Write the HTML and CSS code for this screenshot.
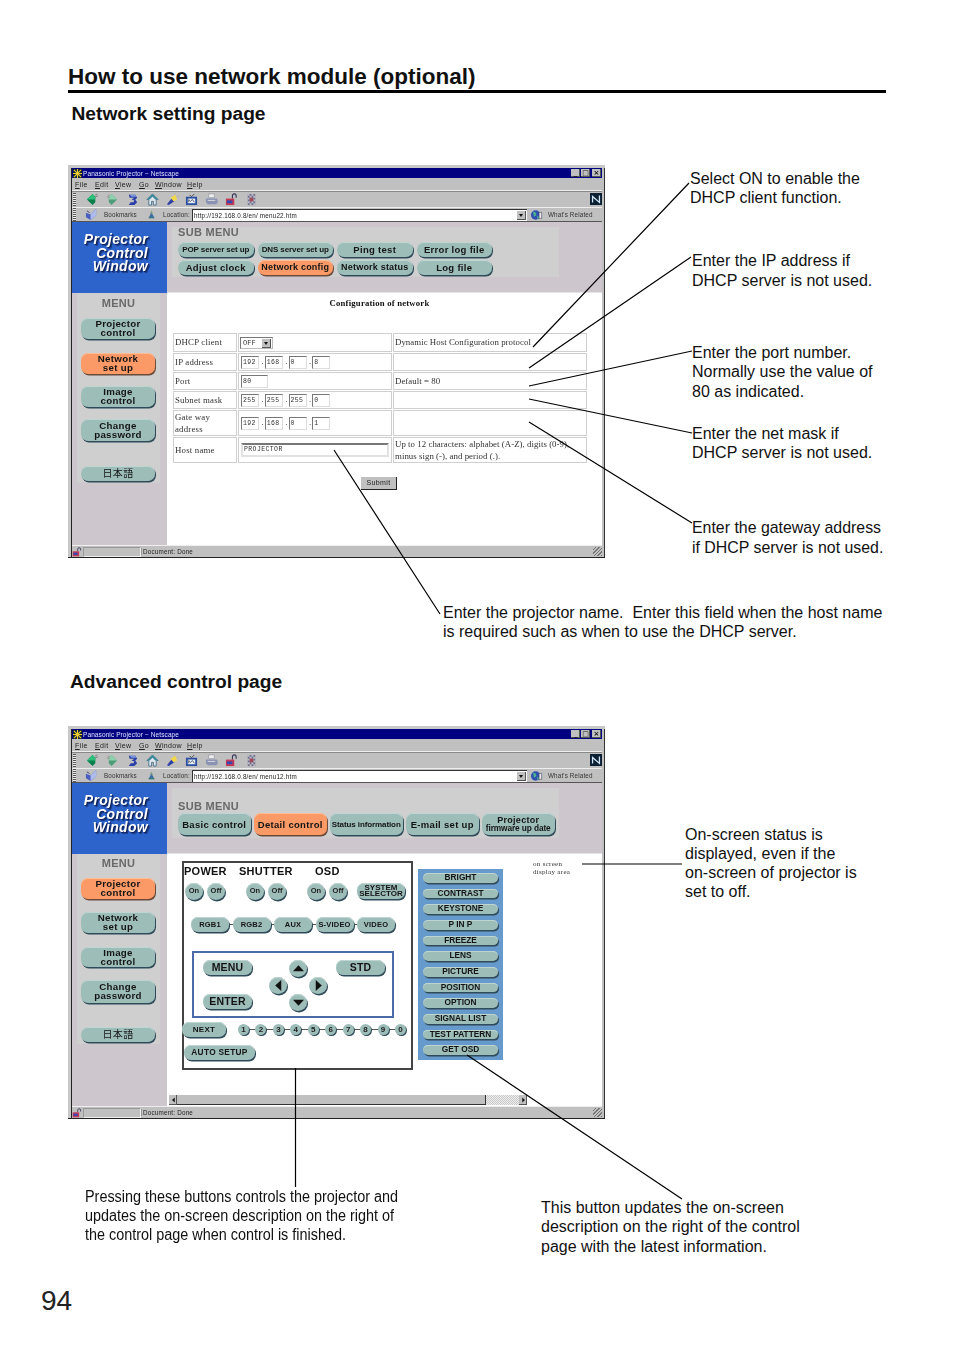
FILE: index.html
```html
<!DOCTYPE html>
<html lang="en">
<head>
<meta charset="utf-8">
<title>How to use network module (optional)</title>
<link rel="stylesheet" href="styles.css">
</head>
<body>
<svg class="defs" width="0" height="0" aria-hidden="true">
  <symbol id="i-back" viewBox="0 0 14 14"><path d="M7 1 1 7l6 6 3-3V4z" fill="#07804a"/><path d="M7 1 1 7h9V4z" fill="#2cc07c"/><path d="M10 2l2-1M10 4l3-1" stroke="#555" stroke-width=".7"/></symbol>
  <symbol id="i-fwd" viewBox="0 0 14 14"><path d="M6 1l6 6-6 6-3-3V4z" fill="#4f9c7a"/><path d="M6 1l6 6H3V4z" fill="#8fd0ae"/><path d="M4 3 2 2M4 5 1 4" stroke="#777" stroke-width=".7"/></symbol>
  <symbol id="i-reload" viewBox="0 0 14 14"><path d="M3 2h7l2 3-2 2 2 3-3 3H3l2-3h3l1-2-3-1 3-2H4z" fill="#2a3fa8"/><path d="M4 2h6l1 2H6z" fill="#7f9ae0"/></symbol>
  <symbol id="i-home" viewBox="0 0 14 14"><path d="M7 1 1 7h2v6h3V9h2v4h3V7h2z" fill="#dfe6ee" stroke="#2f5f7a" stroke-width=".8"/><path d="M7 1 1 7h3l3-3 3 3h3z" fill="#3a8a9c"/></symbol>
  <symbol id="i-search" viewBox="0 0 14 14"><path d="M1 12 6 6l3 3-6 4z" fill="#2d40a8"/><path d="M5 5l5-3 2 5-4 2z" fill="#f3d74a"/><path d="M9 1l2-1M12 4l2-1" stroke="#aa8" stroke-width=".7"/></symbol>
  <symbol id="i-guide" viewBox="0 0 14 14"><path d="M5 2 7 4l3-3" fill="none" stroke="#333" stroke-width=".8"/><rect x="1" y="4" width="12" height="9" fill="#2d4fa0"/><rect x="3" y="6" width="8" height="5" fill="#e6eef6"/><path d="M4 10V7l2 2 2-2 2 3" fill="none" stroke="#223" stroke-width=".7"/></symbol>
  <symbol id="i-print" viewBox="0 0 14 14"><path d="M4 1h6v4H4z" fill="#eee" stroke="#889" stroke-width=".6"/><path d="M1 6h12l1 4-2 2H3L1 10z" fill="#8a93b4"/><path d="M3 8h8" stroke="#ddd"/></symbol>
  <symbol id="i-lock" viewBox="0 0 14 14"><path d="M8 6V3a2 2 0 0 1 4 0v2" fill="none" stroke="#335" stroke-width="1.2"/><rect x="1" y="6" width="9" height="7" fill="#c43a55"/><rect x="2" y="8" width="6" height="3" fill="#3647b4"/></symbol>
  <symbol id="i-stop" viewBox="0 0 14 14"><path d="M3 1h8v12H3z" fill="#6f6f96"/><path d="M3 1h2v2H3zm4 0h2v2H7zM5 3h2v2H5zm4 0h2v2H9zM3 5h2v2H3zm4 0h2v2H7zM5 7h2v2H5zm4 0h2v2H9zM3 9h2v2H3zm4 0h2v2H7zM5 11h2v2H5zm4 0h2v2H9z" fill="#c0c0c0"/><rect x="5" y="5" width="4" height="4" fill="#a54a5c"/></symbol>
  <symbol id="i-book" viewBox="0 0 14 14"><path d="M1 5l5 2 6-6v7l-6 5-5-3z" fill="#4a5ec0"/><path d="M6 7l6-6v7l-6 5z" fill="#aebcec"/><path d="M2 3l3 2" stroke="#226" stroke-width=".8"/></symbol>
  <symbol id="i-loc" viewBox="0 0 14 14"><path d="M7 1l2 5h-1l4 7H2l4-7H5z" fill="#3a6da4"/><path d="M7 1l2 5H7z" fill="#d8c94c"/><path d="M3 12h8" stroke="#3a8a5a"/></symbol>
  <symbol id="i-globe" viewBox="0 0 14 14"><circle cx="6" cy="7" r="5.5" fill="#2f50b0"/><path d="M3 3l3 1 1 3-3 2zM8 8l2 1-1 3-1-1z" fill="#4fb48a"/><path d="M10 4h3v7h-3z" fill="#e8e8f2" stroke="#334" stroke-width=".6"/></symbol>
  <symbol id="i-n" viewBox="0 0 14 14"><rect width="14" height="14" fill="#0c1f33"/><path d="M3 11V4l8 7V3" fill="none" stroke="#cfe4f2" stroke-width="1.5"/></symbol>
  <symbol id="i-up" viewBox="0 0 10 10"><path d="M5 2 10 7.500H0z" fill="#111"/></symbol>
  <symbol id="i-down" viewBox="0 0 10 10"><path d="M5 8 10 2.500H0z" fill="#111"/></symbol>
  <symbol id="i-left" viewBox="0 0 10 10"><path d="M2 5 7.500 0v10z" fill="#111"/></symbol>
  <symbol id="i-right" viewBox="0 0 10 10"><path d="M8 5 2.500 0v10z" fill="#111"/></symbol>
</svg>

<main class="page">
  <h1 class="title">How to use network module (optional)</h1>
  <h2 class="head head-a">Network setting page</h2>

  <section class="window win-a">
    <div class="frame">
      <div class="titlebar">
        <svg class="app-ico" viewBox="0 0 10 10"><rect width="10" height="10" fill="#123"/><path d="M5 0v10M0 5h10M1 1l8 8M9 1l-8 8" stroke="#f0d030" stroke-width="1.2"/></svg>
        <span class="title-text">Panasonic Projector − Netscape</span>
        <span class="winbtns"><b class="wb">_</b><b class="wb">□</b><b class="wb wb-x">×</b></span>
      </div>
      <div class="menubar"><span><u>F</u>ile</span><span><u>E</u>dit</span><span><u>V</u>iew</span><span><u>G</u>o</span><span><u>W</u>indow</span><span><u>H</u>elp</span></div>
      <div class="toolbar">
        <i class="grip"></i>
        <svg class="tb"><use href="#i-back"/></svg><svg class="tb"><use href="#i-fwd"/></svg><svg class="tb"><use href="#i-reload"/></svg><svg class="tb"><use href="#i-home"/></svg><svg class="tb"><use href="#i-search"/></svg><svg class="tb"><use href="#i-guide"/></svg><svg class="tb"><use href="#i-print"/></svg><svg class="tb"><use href="#i-lock"/></svg><svg class="tb"><use href="#i-stop"/></svg>
        <svg class="nlogo"><use href="#i-n"/></svg>
      </div>
      <div class="locbar">
        <i class="grip"></i>
        <svg class="loc-book"><use href="#i-book"/></svg><span class="loc-t loc-bm">Bookmarks</span>
        <svg class="loc-ico"><use href="#i-loc"/></svg><span class="loc-t loc-l">Location:</span>
        <span class="url">http://192.168.0.8/en/ menu22.htm<b class="drop"></b></span>
        <svg class="loc-globe"><use href="#i-globe"/></svg><span class="loc-t">What's Related</span>
      </div>
      <div class="content">
        <div class="logo">Projector<br>Control<br>Window</div>
        <div class="subarea">
          <div class="subpanel">
            <div class="caption">SUB MENU</div>
            <div class="subgrid">
              <a class="pill s-n">POP server set up</a><a class="pill s-n">DNS server set up</a><a class="pill">Ping test</a><a class="pill">Error log file</a>
              <a class="pill">Adjust clock</a><a class="pill on s-m">Network config</a><a class="pill s-m">Network status</a><a class="pill">Log file</a>
            </div>
          </div>
        </div>
        <div class="side">
          <nav class="sidepanel">
            <div class="caption cap-side">MENU</div>
            <a class="pill mbtn m1">Projector<br>control</a>
            <a class="pill mbtn m2 on">Network<br>set up</a>
            <a class="pill mbtn m3">Image<br>control</a>
            <a class="pill mbtn m4">Change<br>password</a>
            <a class="pill mbtn m5 jp">日本語</a>
          </nav>
        </div>
        <div class="main">
          <div class="conf-title">Configuration of network</div>
          <table class="conf">
            <tr class="r1"><td class="c1">DHCP client</td><td class="c2"><span class="sel">OFF<b class="drop"></b></span></td><td class="c3">Dynamic Host Configuration protocol</td></tr>
            <tr class="r2"><td>IP address</td><td><span class="inp">192</span>.<span class="inp">168</span>.<span class="inp">0</span>.<span class="inp">8</span></td><td></td></tr>
            <tr class="r2"><td>Port</td><td><span class="inp inp-port">80</span></td><td>Default = 80</td></tr>
            <tr class="r2"><td>Subnet mask</td><td><span class="inp">255</span>.<span class="inp">255</span>.<span class="inp">255</span>.<span class="inp">0</span></td><td></td></tr>
            <tr class="r3"><td>Gate way<br>address</td><td><span class="inp">192</span>.<span class="inp">168</span>.<span class="inp">0</span>.<span class="inp">1</span></td><td></td></tr>
            <tr class="r3"><td>Host name</td><td><span class="inp inp-host">PROJECTOR</span></td><td>Up to 12 characters: alphabet (A-Z), digits (0-9),<br>minus sign (-), and period (.).</td></tr>
          </table>
          <div class="submit-row"><span class="submit">Submit</span></div>
        </div>
      </div>
      <div class="status">
        <svg class="st-lock"><use href="#i-lock"/></svg><span class="st-cell"></span><span class="st-text">Document: Done</span><i class="st-grip"></i>
      </div>
    </div>
  </section>

  <h2 class="head head-b">Advanced control page</h2>

  <section class="window win-b">
    <div class="frame">
      <div class="titlebar">
        <svg class="app-ico" viewBox="0 0 10 10"><rect width="10" height="10" fill="#123"/><path d="M5 0v10M0 5h10M1 1l8 8M9 1l-8 8" stroke="#f0d030" stroke-width="1.2"/></svg>
        <span class="title-text">Panasonic Projector − Netscape</span>
        <span class="winbtns"><b class="wb">_</b><b class="wb">□</b><b class="wb wb-x">×</b></span>
      </div>
      <div class="menubar"><span><u>F</u>ile</span><span><u>E</u>dit</span><span><u>V</u>iew</span><span><u>G</u>o</span><span><u>W</u>indow</span><span><u>H</u>elp</span></div>
      <div class="toolbar">
        <i class="grip"></i>
        <svg class="tb"><use href="#i-back"/></svg><svg class="tb"><use href="#i-fwd"/></svg><svg class="tb"><use href="#i-reload"/></svg><svg class="tb"><use href="#i-home"/></svg><svg class="tb"><use href="#i-search"/></svg><svg class="tb"><use href="#i-guide"/></svg><svg class="tb"><use href="#i-print"/></svg><svg class="tb"><use href="#i-lock"/></svg><svg class="tb"><use href="#i-stop"/></svg>
        <svg class="nlogo"><use href="#i-n"/></svg>
      </div>
      <div class="locbar">
        <i class="grip"></i>
        <svg class="loc-book"><use href="#i-book"/></svg><span class="loc-t loc-bm">Bookmarks</span>
        <svg class="loc-ico"><use href="#i-loc"/></svg><span class="loc-t loc-l">Location:</span>
        <span class="url">http://192.168.0.8/en/ menu12.htm<b class="drop"></b></span>
        <svg class="loc-globe"><use href="#i-globe"/></svg><span class="loc-t">What's Related</span>
      </div>
      <div class="content">
        <div class="logo">Projector<br>Control<br>Window</div>
        <div class="subarea">
          <div class="subpanel subpanel-b">
            <div class="caption">SUB MENU</div>
            <div class="subrow">
              <a class="pill p-tall">Basic control</a><a class="pill p-tall on">Detail control</a><a class="pill p-tall s-n">Status information</a><a class="pill p-tall">E-mail set up</a><a class="pill p-tall p-two"><span class="p-top">Projector</span><span class="p-low">firmware up date</span></a>
            </div>
          </div>
        </div>
        <div class="side">
          <nav class="sidepanel">
            <div class="caption cap-side">MENU</div>
            <a class="pill mbtn m1 on">Projector<br>control</a>
            <a class="pill mbtn m2">Network<br>set up</a>
            <a class="pill mbtn m3">Image<br>control</a>
            <a class="pill mbtn m4">Change<br>password</a>
            <a class="pill mbtn m5 jp">日本語</a>
          </nav>
        </div>
        <div class="main">
          <div class="ctlwrap">
            <div class="ctl">
              <div class="ctl-labels"><span class="l-power">POWER</span><span class="l-shutter">SHUTTER</span><span class="l-osd">OSD</span></div>
              <div class="ctl-power">
                <a class="rnd">On</a><a class="rnd">Off</a>
                <a class="rnd gap-a">On</a><a class="rnd">Off</a>
                <a class="rnd gap-a">On</a><a class="rnd">Off</a>
                <a class="pill sys">SYSTEM<br>SELECTOR</a>
              </div>
              <div class="ctl-inputs">
                <a class="pill inbtn">RGB1</a><a class="pill inbtn">RGB2</a><a class="pill inbtn">AUX</a><a class="pill inbtn">S-VIDEO</a><a class="pill inbtn">VIDEO</a>
              </div>
              <div class="menubox">
                <a class="pill mb mb-menu">MENU</a>
                <a class="rnd dp dp-up"><svg><use href="#i-up"/></svg></a>
                <a class="pill mb mb-std">STD</a>
                <a class="rnd dp dp-left"><svg><use href="#i-left"/></svg></a>
                <a class="rnd dp dp-right"><svg><use href="#i-right"/></svg></a>
                <a class="pill mb mb-enter">ENTER</a>
                <a class="rnd dp dp-down"><svg><use href="#i-down"/></svg></a>
              </div>
              <div class="ctl-next">
                <a class="pill next">NEXT</a>
                <div class="digits"><a class="dig">1</a><a class="dig">2</a><a class="dig">3</a><a class="dig">4</a><a class="dig">5</a><a class="dig">6</a><a class="dig">7</a><a class="dig">8</a><a class="dig">9</a><a class="dig">0</a></div>
              </div>
              <a class="pill auto">AUTO SETUP</a>
            </div>
            <div class="osdpanel">
              <a class="pill osd">BRIGHT</a><a class="pill osd">CONTRAST</a><a class="pill osd">KEYSTONE</a><a class="pill osd">P IN P</a><a class="pill osd">FREEZE</a><a class="pill osd">LENS</a><a class="pill osd">PICTURE</a><a class="pill osd">POSITION</a><a class="pill osd">OPTION</a><a class="pill osd">SIGNAL LIST</a><a class="pill osd">TEST PATTERN</a><a class="pill osd">GET OSD</a>
            </div>
            <div class="osd-note">on screen<br>display area</div>
          </div>
          <div class="hscroll"><b class="sb-btn"><svg><use href="#i-left"/></svg></b><i class="sb-thumb"></i><i class="sb-dots"></i><b class="sb-btn"><svg><use href="#i-right"/></svg></b></div>
        </div>
      </div>
      <div class="status">
        <svg class="st-lock"><use href="#i-lock"/></svg><span class="st-cell"></span><span class="st-text">Document: Done</span><i class="st-grip"></i>
      </div>
    </div>
  </section>

  <div class="pagenum">94</div>

  <p class="note n1">Select ON to enable the<br>DHCP client function.</p>
  <p class="note n2">Enter the IP address if<br>DHCP server is not used.</p>
  <p class="note n3">Enter the port number.<br>Normally use the value of<br>80 as indicated.</p>
  <p class="note n4">Enter the net mask if<br>DHCP server is not used.</p>
  <p class="note n5">Enter the gateway address<br>if DHCP server is not used.</p>
  <p class="note n6">Enter the projector name.&nbsp; Enter this field when the host name<br>is required such as when to use the DHCP server.</p>
  <p class="note n7">On-screen status is<br>displayed, even if the<br>on-screen of projector is<br>set to off.</p>
  <p class="note n8">Pressing these buttons controls the projector and<br>updates the on-screen description on the right of<br>the control page when control is finished.</p>
  <p class="note n9">This button updates the on-screen<br>description on the right of the control<br>page with the latest information.</p>

  <svg class="leaders" viewBox="0 0 954 1349" aria-hidden="true">
    <path d="M689 183 533 347M691 257 529 368M692 351 529 386M692 433 529 399M692 523 529 422M440 614 334 450M582 864H682M295.500 1068V1187M682 1199 467 1055"/>
  </svg>
</main>
</body>
</html>
```

FILE: styles.css
```css
* { box-sizing: border-box; }
html, body { margin: 0; padding: 0; background: #fff; }
body { font-family: "Liberation Sans", Arial, sans-serif; color: #111; }
.defs { position: absolute; }
a { display: block; }

.page { position: relative; width: 954px; height: 1349px; padding-left: 68px; overflow: hidden; }
.title { margin: 0; padding-top: 64px; width: 818px; height: 93px; font-size: 22.500px; line-height: 25px; font-weight: 700; border-bottom: 3px solid #000; white-space: nowrap; }
.head { margin: 0; font-weight: 700; font-size: 19.200px; line-height: 24px; color: #111; }
.head-a { margin: 9px 0 39px 3.500px; }
.head-b { margin: 112px 0 32px 2px; }
.pagenum { margin: 165px 0 0 -27px; font-size: 28px; line-height: 34px; color: #222; }

.note { position: absolute; margin: 0; font-size: 16px; line-height: 19.300px; white-space: nowrap; color: #111; }
.n1 { left: 690px; top: 168.500px; }
.n2 { left: 692px; top: 251px; line-height: 20px; }
.n3 { left: 692px; top: 343px; }
.n4 { left: 692px; top: 424px; }
.n5 { left: 692px; top: 518px; line-height: 20px; font-size: 15.900px; }
.n6 { left: 443px; top: 603px; }
.n7 { left: 685px; top: 824.500px; }
.n8 { left: 84.500px; top: 1186.500px; transform-origin: 0 0; transform: scaleX(.9); }
.n9 { left: 541px; top: 1198px; }
.leaders { position: absolute; left: 0; top: 0; width: 954px; height: 1349px; pointer-events: none; }
.leaders path { fill: none; stroke: #000; stroke-width: 1.200; }

/* browser window */
.window { width: 537px; height: 393px; padding: 3px 0 0 3px; background: #c8c8c8; border-bottom: 1px solid #222; filter: blur(.3px); }
.frame { width: 534px; height: 389px; display: flex; flex-direction: column; background: #c0c0c0; border-left: 1px solid #222; border-right: 1px solid #333; padding-right: 2px; font-size: 7px; color: #222; letter-spacing: .35px; }

.titlebar { height: 10px; flex: none; background: #000080; color: #dfe4ff; display: flex; align-items: center; padding-left: 1px; }
.app-ico { width: 9px; height: 9px; flex: none; }
.title-text { margin-left: 1px; font-size: 6.500px; letter-spacing: .1px; }
.winbtns { margin-left: auto; display: flex; gap: 1px; padding-right: 1px; }
.wb { width: 9px; height: 8px; background: #c0c0c0; color: #111; font: 700 7px/8px "DejaVu Sans", sans-serif; text-align: center; box-shadow: inset -1px -1px 0 #555; letter-spacing: 0; }
.wb-x { margin-left: 1px; }

.menubar { height: 13px; flex: none; display: flex; align-items: center; border-bottom: 1px solid #eee; box-shadow: 0 1px 0 #888; padding-left: 3px; }
.menubar span:nth-child(1) { width: 20px; }
.menubar span:nth-child(2) { width: 20px; }
.menubar span:nth-child(3) { width: 24px; }
.menubar span:nth-child(4) { width: 16px; }
.menubar span:nth-child(5) { width: 32px; }

.grip { width: 3px; height: 13px; flex: none; margin-left: 1px; background: repeating-linear-gradient(#555 0 1px, #eee 1px 2px); }
.toolbar { height: 16px; flex: none; display: flex; align-items: center; }
.tb { width: 13px; height: 13px; flex: none; margin-right: 6.900px; }
.tb:first-of-type { margin-left: 10px; }
.nlogo { width: 12px; height: 12px; margin-left: auto; flex: none; }

.locbar { height: 14px; flex: none; display: flex; align-items: center; border-top: 1px solid #eee; }
.loc-book { width: 13px; height: 13px; margin-left: 9px; flex: none; }
.loc-bm { margin-left: 6px; width: 34px; }
.loc-t { font-size: 6.300px; color: #333; white-space: nowrap; letter-spacing: .15px; flex: none; }
.loc-ico { width: 9px; height: 11px; margin-left: 9px; flex: none; }
.loc-l { margin-left: 7px; width: 28px; }
.url { width: 335px; height: 12px; margin-left: 1px; background: #fff; border-top: 1px solid #333; border-left: 1px solid #333; position: relative; font-size: 6.300px; line-height: 11px; padding-left: 1px; white-space: nowrap; flex: none; letter-spacing: .2px; }
.drop { position: absolute; right: 1px; top: 1px; width: 9px; height: 9px; background: #c0c0c0; box-shadow: inset -1px -1px 0 #555; }
.drop::after { content: ""; position: absolute; left: 2px; top: 3px; border: 2.500px solid transparent; border-top: 3px solid #111; border-bottom: 0; }
.loc-globe { width: 13px; height: 12px; margin: 0 5px 0 3px; flex: none; }

.content { flex: 1; min-height: 0; display: grid; grid-template-columns: 95px 1fr; grid-template-rows: 71px 1fr; border-top: 1px solid #555; background: #cdc6cd; }
.logo { background: #2d64cc; color: #fff; font-weight: 700; font-style: italic; font-size: 14px; line-height: 13.500px; text-align: right; padding: 11px 19px 0 0; text-shadow: 1px 1px 1px #0c1f55, 2px 2px 1px #1a3a88; letter-spacing: .3px; }
.subarea { padding: 5px 43px 0 5px; border-bottom: 1px solid #e6e3e6; }
.subpanel { height: 50px; background: #cfcfcf; }
.subpanel-b { padding-top: 13px; }
.caption { padding-left: 6px; font-size: 11px; line-height: 11px; font-weight: 700; color: #696969; letter-spacing: .3px; }
.subgrid { display: grid; grid-template-columns: repeat(4, 75.500px); gap: 3px 4px; height: 33px; margin: 4px 0 0 6px; }
.subgrid .pill { height: 15px; }
.subrow { display: flex; gap: 3.500px; margin: 1px 0 0 6px; }

.pill { background: #9dbdb9; border-radius: 7px; color: #141414; font-size: 9.500px; line-height: 9px; font-weight: 700; letter-spacing: .3px; text-align: center; white-space: nowrap; display: flex; align-items: center; justify-content: center; box-shadow: 1px 1.500px 0 #2f4a58, inset 0 1px 0 #bfd5d2; }
.pill.on { background: #fb9a66; box-shadow: 1px 1.500px 0 #6a4a38, inset 0 1px 0 #ffbd96; }
.pill.s-n { font-size: 8px; letter-spacing: -.1px; }
.pill.s-m { font-size: 9px; letter-spacing: .2px; }
.p-tall { width: 72.500px; height: 22px; }
.p-two { flex-direction: column; }
.p-top { font-size: 9px; line-height: 8.500px; }
.p-low { font-size: 8.300px; line-height: 8.500px; letter-spacing: -.1px; }

.side { background: #cdc6cd; }
.sidepanel { margin-left: 5px; width: 83px; height: 190px; padding-top: 5px; background: #cfcfcf; }
.win-b .sidepanel { padding-top: 4px; }
.caption.cap-side { padding-left: 0; text-align: center; height: 15px; }
.mbtn { width: 74px; margin-left: 4px; font-size: 9.700px; padding-bottom: 1px; }
.m1 { margin-top: 5px; height: 21px; }
.m2 { margin-top: 14px; height: 21px; }
.m3 { margin-top: 12px; height: 21px; }
.m4 { margin-top: 12px; height: 22px; }
.m5 { margin-top: 25px; height: 15px; }
.win-b .m2 { margin-top: 13px; }
.win-b .m3 { margin-top: 14px; height: 20px; }
.win-b .m4 { margin-top: 13px; height: 23px; }
.win-b .m5 { margin-top: 24px; }
.pill.jp { font-family: "Noto Sans CJK JP", sans-serif; font-weight: 400; font-size: 10px; padding-bottom: 2px; }

.main { background: #fff; display: flex; flex-direction: column; min-width: 0; min-height: 0; position: relative; }

/* configuration table */
.conf-title { margin: 5px 0 0; height: 33px; text-align: center; width: 425px; font: 700 8.700px/11px "Liberation Serif", serif; color: #111; letter-spacing: .2px; }
.conf { width: 416px; margin: 1px 0 0 5px; border-collapse: separate; border-spacing: 1px; font: 8.800px/13px "Liberation Serif", serif; color: #333; letter-spacing: .05px; table-layout: fixed; }
.conf td { border: 1px solid #cfcfcf; padding: 0 1px; white-space: nowrap; overflow: hidden; }
.conf td:first-child { letter-spacing: .2px; }
.c1 { width: 64px; }
.c2 { width: 154px; }
.r1 td { height: 19px; }
.r2 td { height: 18px; }
.r3 td { height: 26px; line-height: 12px; }
.inp { display: inline-block; width: 18px; height: 13px; margin: 0 2.500px 0 1px; vertical-align: middle; border: 1px solid #ddd; border-top-color: #777; border-left-color: #777; font: 6.500px/11px "Liberation Mono", monospace; padding-left: 1px; letter-spacing: .4px; background: #fff; }
.inp-port { width: 27px; }
.inp-host { width: 148px; border: 2px solid #e2e2e2; border-top-color: #777; line-height: 9px; height: 14px; }
.sel { display: inline-block; position: relative; width: 33px; height: 12px; margin-left: 0; vertical-align: middle; border: 1px solid #bbb; border-top-color: #777; border-left-color: #777; font: 7px/10px "Liberation Mono", monospace; padding-left: 2px; }
.submit-row { margin: 13px 0 0 194px; }
.submit { display: block; width: 36px; height: 13px; background: #c0c0c0; border-right: 1px solid #222; border-bottom: 1px solid #222; font-size: 7px; line-height: 12px; text-align: center; color: #222; }

/* control page */
.ctlwrap { flex: 1; display: flex; align-items: flex-start; padding: 7px 0 0 15px; min-height: 0; }
.ctl { width: 231px; height: 209px; flex: none; border: 2px solid #444; display: flex; flex-direction: column; background: #fff; }
.ctl-labels { height: 17px; flex: none; font-size: 11px; line-height: 17px; font-weight: 700; letter-spacing: .25px; white-space: nowrap; display: flex; color: #111; }
.l-power { margin-left: 0; width: 55px; }
.l-shutter { width: 76px; }
.ctl-power { height: 17px; margin-top: 3px; flex: none; display: flex; padding-left: 1px; }
.rnd { width: 18px; height: 17px; border-radius: 50%; background: #9dbdb9; box-shadow: 1px 1.500px 0 #2f4a58, inset 0 1px 0 #bfd5d2; font-size: 7.500px; font-weight: 700; line-height: 16px; text-align: center; margin-right: 4px; flex: none; letter-spacing: 0; }
.rnd.gap-a { margin-left: 17px; }
.pill.sys { width: 48px; height: 16px; margin-left: 6px; flex: none; flex-direction: column; font-size: 8px; line-height: 6.500px; letter-spacing: 0; }
.ctl-inputs { height: 15px; margin: 17px 0 0 7px; flex: none; display: flex; gap: 3.500px; width: 205px; background: linear-gradient(#555, #555) 0 7px / 100% 1px no-repeat; }
.pill.inbtn { width: 38px; height: 15px; flex: none; font-size: 7.500px; letter-spacing: .2px; }
.menubox { margin: 19px 0 0 8px; width: 202px; height: 67px; flex: none; border: 2px solid #4b6aa8; padding: 7px 0 0 9px; display: grid; grid-template-columns: 49px 17px 18px 2px 18px 2px 18px 9px 49px; grid-template-rows: 17px 17px 17px; background: #fff; }
.pill.mb { height: 15px; font-size: 10.500px; letter-spacing: .2px; }
.mb-menu { grid-column: 1; grid-row: 1; }
.mb-std { grid-column: 9; grid-row: 1; }
.mb-enter { grid-column: 1; grid-row: 3; }
.dp { margin: 0; width: 18px; height: 17px; display: flex; align-items: center; justify-content: center; }
.dp svg { width: 11px; height: 11px; }
.dp-up { grid-column: 5; grid-row: 1; }
.dp-left { grid-column: 3; grid-row: 2; }
.dp-right { grid-column: 7; grid-row: 2; }
.dp-down { grid-column: 5; grid-row: 3; }
.ctl-next { height: 15px; margin: 4px 0 0 -2px; flex: none; display: flex; align-items: center; }
.pill.next { width: 44px; height: 15px; font-size: 8px; flex: none; }
.digits { margin-left: 12px; width: 168px; height: 11px; display: flex; justify-content: space-between; background: linear-gradient(#555, #555) 0 5px / 100% 1px no-repeat; }
.dig { width: 11px; height: 11px; border-radius: 50%; background: #9dbdb9; box-shadow: 1px 1px 0 #2f4a58; font-size: 8px; font-weight: 700; line-height: 11px; text-align: center; letter-spacing: 0; }
.pill.auto { width: 71px; height: 15px; margin-top: 8px; flex: none; font-size: 8.300px; }

.osdpanel { width: 85px; height: 191px; flex: none; margin: 8px 0 0 5px; padding: 4px 5px 5px; background: #6699cc; display: flex; flex-direction: column; justify-content: space-between; }
.pill.osd { height: 9.500px; font-size: 8.300px; line-height: 9.500px; letter-spacing: 0; border-radius: 5px; }
.osd-note { margin: -1px 0 0 30px; font: 7px/8px "Liberation Serif", serif; color: #333; white-space: nowrap; letter-spacing: .3px; }

.hscroll { height: 10px; flex: none; display: flex; align-items: stretch; padding-left: 2px; margin-bottom: 1px; background: #fff; }
.sb-btn { width: 8px; background: #c0c0c0; box-shadow: inset -1px -1px 0 #555; display: flex; align-items: center; justify-content: center; flex: none; }
.sb-btn svg { width: 5px; height: 6px; }
.sb-thumb { width: 309px; background: #c0c0c0; border-right: 1px solid #333; border-bottom: 1px solid #333; flex: none; }
.sb-dots { width: 33px; flex: none; background: repeating-conic-gradient(#c8c8c8 0 25%, #eee 0 50%) 0 0 / 2px 2px; }

/* status bar */
.status { height: 12px; flex: none; display: flex; align-items: center; border-top: 1px solid #eee; background: #c0c0c0; position: relative; }
.st-lock { width: 10px; height: 10px; flex: none; }
.st-cell { width: 58px; height: 10px; margin-left: 1px; border: 1px solid #999; border-right-color: #eee; border-bottom-color: #eee; flex: none; }
.st-text { margin-left: 0; font-size: 6.300px; white-space: nowrap; border-left: 1px solid #999; padding-left: 1px; letter-spacing: .2px; }
.st-grip { margin-left: auto; width: 9px; height: 9px; background: repeating-linear-gradient(135deg, #c0c0c0 0 1.500px, #777 1.500px 2.500px); }
```
